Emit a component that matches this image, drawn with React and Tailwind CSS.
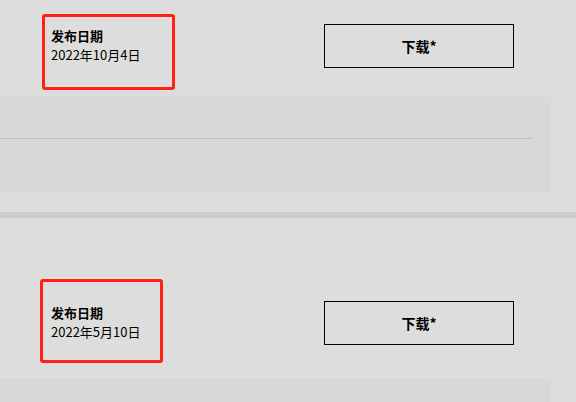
export default function App() {
  const font = { fontFamily: '"Noto Sans CJK SC", "Noto Sans", sans-serif' };
  return (
    <div className="w-[576px] h-[402px] overflow-hidden bg-[#dddddd] text-black" style={font}>
      {/* Section 1 */}
      <div className="pt-[14px]">
        <div className="flex items-start">
          <div className="ml-[42px] w-[133px] h-[76px] border-[3px] border-[#ff2212] rounded-[3px] pl-[6px] pt-[9px]">
            <div className="text-[13px] leading-[19px] font-bold">发布日期</div>
            <div className="text-[13px] leading-[19px]">2022年10月4日</div>
          </div>
          <button className="ml-[149px] mt-[10px] w-[190px] h-[44px] border border-black flex items-center justify-center text-[14px] font-bold">
            下载*
          </button>
        </div>
        <div className="mt-[7px] w-[551px] h-[96px] bg-[#d8d8d8] pt-[41px]">
          <div className="w-[532px] h-px bg-[#bfbfbf]"></div>
        </div>
        <div className="h-[19px]"></div>
        <div className="h-[6px] bg-[#cccccc]"></div>
      </div>
      {/* Section 2 */}
      <div className="pt-[61px]">
        <div className="flex items-start">
          <div className="ml-[40px] w-[123px] h-[84px] border-[3px] border-[#ff2212] rounded-[3px] pl-[8px] pt-[21px]">
            <div className="text-[13px] leading-[19px] font-bold">发布日期</div>
            <div className="text-[13px] leading-[19px]">2022年5月10日</div>
          </div>
          <button className="ml-[161px] mt-[22px] w-[190px] h-[44px] border border-black flex items-center justify-center text-[14px] font-bold">
            下载*
          </button>
        </div>
        <div className="mt-[15px] w-[551px] h-[40px] bg-[#d8d8d8]"></div>
      </div>
    </div>
  );
}
